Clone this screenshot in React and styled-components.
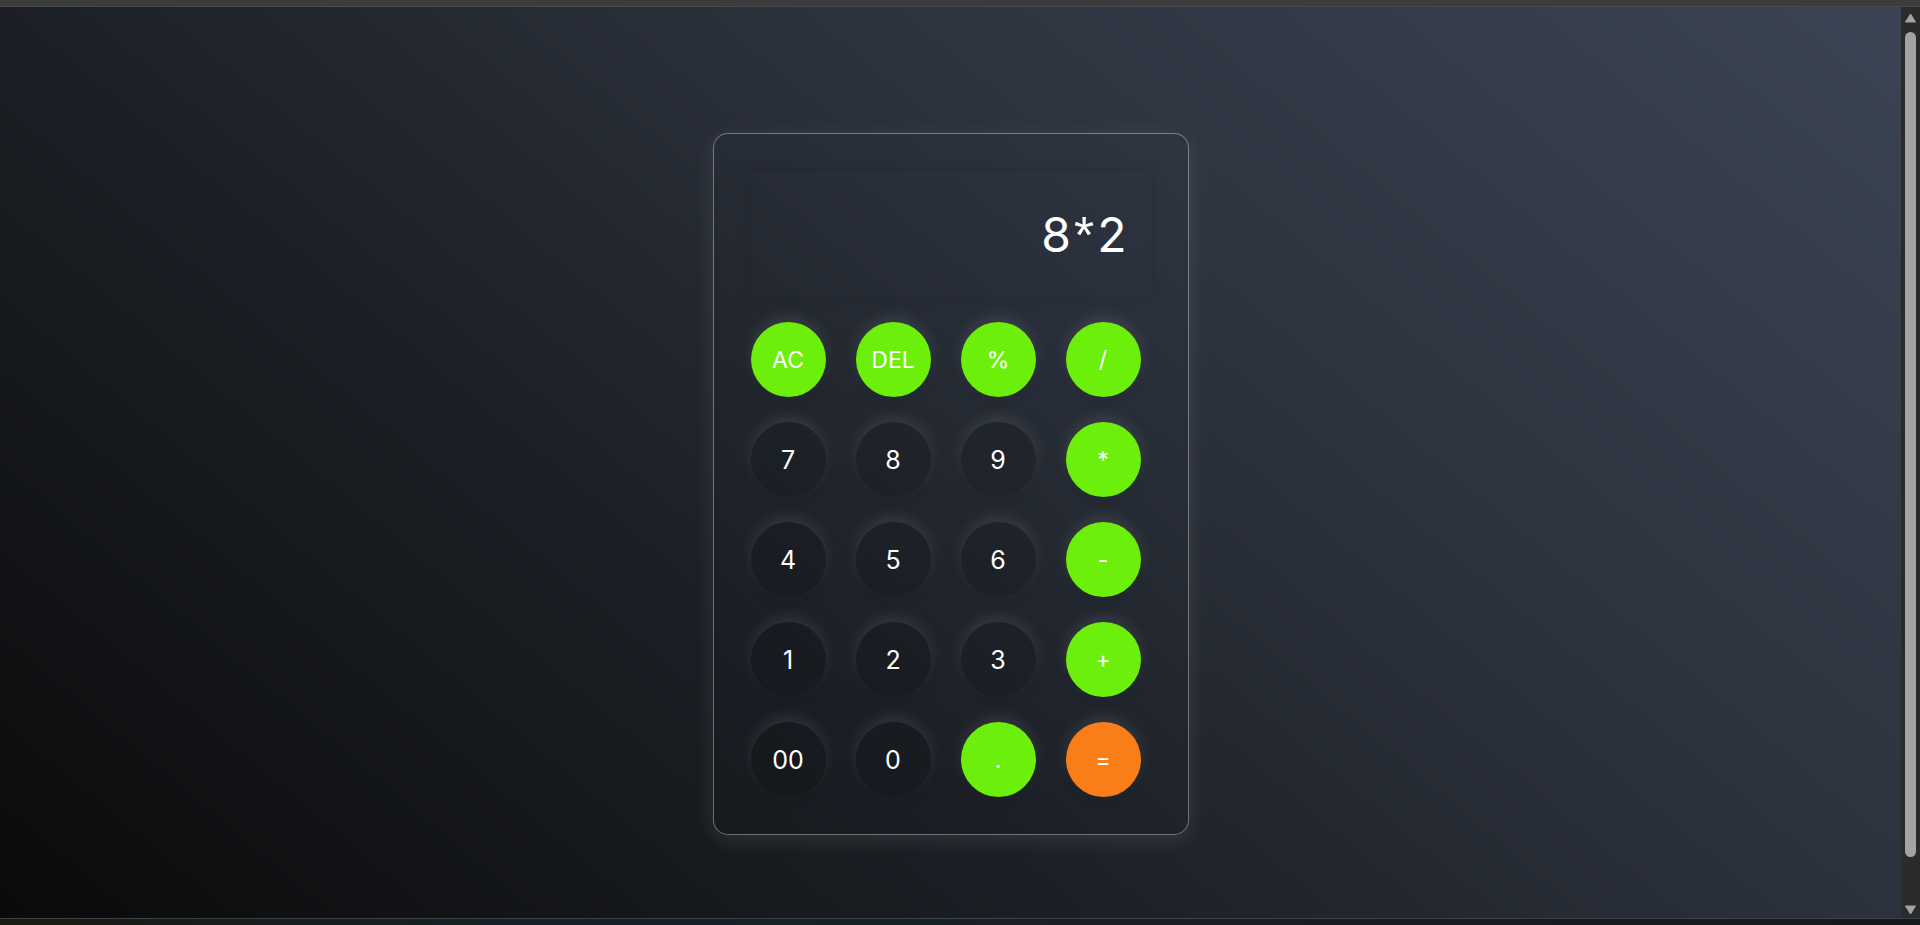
import React from "react";
import styled, { createGlobalStyle } from "styled-components";

const Global = createGlobalStyle`
  html, body { margin: 0; padding: 0; height: 100%; overflow: hidden; background: #3c3c3c; }
  #root { height: 100%; }
  * { box-sizing: border-box; }
`;

const Frame = styled.div`
  height: 100vh;
  display: flex;
  flex-direction: column;
`;

const TopBar = styled.div`
  height: 7px;
  flex: none;
  background: #3c3c3c;
  border-bottom: 1px solid #4a4a4a;
`;

const BottomBar = styled.div`
  height: 7px;
  flex: none;
  border-top: 1px solid #3d4044;
  background: linear-gradient(90deg, #1b1a12 0%, #14222a 30%, #1a2026 55%, #16191c 100%);
`;

const Window = styled.div`
  flex: 1;
  min-height: 0;
  display: flex;
`;

const Viewport = styled.div`
  flex: 1;
  min-width: 0;
  overflow: hidden;
`;

const Rail = styled.div`
  width: 19px;
  flex: none;
  background: #2b2b2b;
  display: flex;
  flex-direction: column;
  align-items: center;
  padding: 6px 0 3px;
`;

const Arrow = styled.svg`
  width: 11px;
  height: 10px;
  flex: none;
  display: block;
`;

const Thumb = styled.div`
  width: 11px;
  height: 825px;
  margin-top: 9px;
  flex: none;
  border-radius: 6px;
  background: #a3a3a3;
`;

const RailSpace = styled.div`
  flex: 1;
`;

const Scene = styled.main`
  padding: 126px 0 138px;
  display: flex;
  justify-content: center;
  background: linear-gradient(40deg, #090909 0%, #1c2026 38%, #2c323d 64%, #3b4454 100%);
`;

const Calculator = styled.section`
  width: 476px;
  padding: 38px 37px 37px;
  border: 1px solid rgba(255, 255, 255, 0.36);
  border-radius: 15px;
  background: rgba(0, 0, 0, 0.01);
  box-shadow: 0 5px 20px rgba(255, 255, 255, 0.1);
  display: flex;
  flex-direction: column;
  gap: 25px;
`;

const Display = styled.div`
  height: 125px;
  display: flex;
  align-items: center;
  justify-content: flex-end;
  padding-right: 21px;
  font-family: Inter, "Noto Sans", sans-serif;
  font-size: 48px;
  font-weight: 400;
  letter-spacing: 3px;
  color: #ffffff;
  box-shadow: 0 0 12px rgba(0, 0, 0, 0.12);
`;

const Star = styled.span`
  font-family: "Liberation Sans", Arial, sans-serif;
  font-size: 1.08em;
`;

const Keys = styled.div`
  display: grid;
  grid-template-columns: repeat(4, 75px);
  column-gap: 30px;
  row-gap: 25px;
`;

const tones = {
  digit: "rgba(0, 0, 0, 0.11)",
  op: "#6cef0b",
  eq: "#f97e17",
};

const Key = styled.button`
  width: 75px;
  height: 75px;
  border: none;
  border-radius: 50%;
  padding: 0;
  display: flex;
  align-items: center;
  justify-content: center;
  font-family: Inter, "Noto Sans", sans-serif;
  font-size: ${(p) => (p.$tone === "digit" ? "25px" : "23px")};
  font-weight: 400;
  color: #ffffff;
  background: ${(p) => tones[p.$tone]};
  box-shadow: 0 -5px 14px rgba(255, 255, 255, 0.1), 0 5px 10px rgba(0, 0, 0, 0.1);
  cursor: pointer;
`;

const keys = [
  ["AC", "op"], ["DEL", "op"], ["%", "op"], ["/", "op"],
  ["7", "digit"], ["8", "digit"], ["9", "digit"], ["*", "op"],
  ["4", "digit"], ["5", "digit"], ["6", "digit"], ["-", "op"],
  ["1", "digit"], ["2", "digit"], ["3", "digit"], ["+", "op"],
  ["00", "digit"], ["0", "digit"], [".", "op"], ["=", "eq"],
];

export default function App() {
  return (
    <>
      <Global />
      <Frame>
        <TopBar />
        <Window>
          <Viewport>
            <Scene>
              <Calculator>
                <Display>8<Star>*</Star>2</Display>
                <Keys>
                  {keys.map(([label, tone]) => (
                    <Key key={label} $tone={tone}>{label}</Key>
                  ))}
                </Keys>
              </Calculator>
            </Scene>
          </Viewport>
          <Rail>
            <Arrow viewBox="0 0 11 10">
              <path d="M5.5 1 L10.5 9 L0.5 9 Z" fill="#a3a3a3" strokeLinejoin="round" stroke="#a3a3a3" strokeWidth="1" />
            </Arrow>
            <Thumb />
            <RailSpace />
            <Arrow viewBox="0 0 11 10">
              <path d="M0.5 1 L10.5 1 L5.5 9 Z" fill="#a3a3a3" strokeLinejoin="round" stroke="#a3a3a3" strokeWidth="1" />
            </Arrow>
          </Rail>
        </Window>
        <BottomBar />
      </Frame>
    </>
  );
}
